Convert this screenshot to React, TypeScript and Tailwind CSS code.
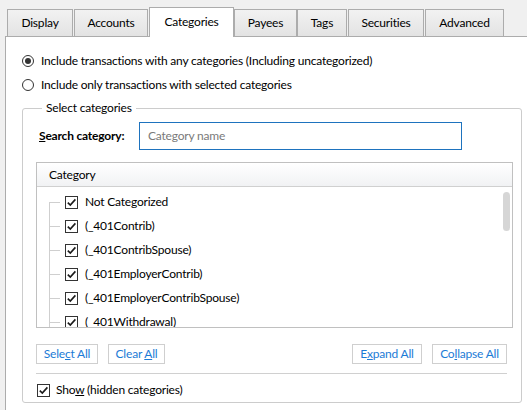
import type { ReactNode } from "react";

const TABS = [
  { label: "Display", cls: "w-[66px]" },
  { label: "Accounts", cls: "ml-[1px] w-[74px]" },
  { label: "Categories", cls: "ml-[1px] w-[85px]", active: true },
  { label: "Payees", cls: "w-[63px]" },
  { label: "Tags", cls: "w-[50px]" },
  { label: "Securities", cls: "ml-[1px] w-[76px]" },
  { label: "Advanced", cls: "ml-[1px] w-[79px]" },
];

const CATEGORIES = [
  "Not Categorized",
  "(_401Contrib)",
  "(_401ContribSpouse)",
  "(_401EmployerContrib)",
  "(_401EmployerContribSpouse)",
  "(_401Withdrawal)",
];

function Radio({ checked }: { checked?: boolean }) {
  return (
    <span className="flex h-[12px] w-[12px] items-center justify-center rounded-full border border-[#333333] bg-white">
      {checked && <span className="h-[6px] w-[6px] rounded-full bg-[#333333]" />}
    </span>
  );
}

function CheckBox() {
  return (
    <span className="flex h-[13px] w-[13px] shrink-0 items-center justify-center border border-[#333333] bg-white">
      <svg viewBox="0 0 11 11" className="h-[11px] w-[11px]">
        <path d="M1.8 5.6 L4.3 8.1 L9.4 2.4" fill="none" stroke="#1a1a1a" strokeWidth="1.6" />
      </svg>
    </span>
  );
}

function LinkButton({ children, cls }: { children: ReactNode; cls: string }) {
  return (
    <button className={`flex h-[20px] items-center justify-center border border-[#cfcfcf] bg-white text-[12px] text-[#1c7bd6] ${cls}`}>
      <span className="whitespace-pre">{children}</span>
    </button>
  );
}

export default function App() {
  return (
    <div
      className="flex h-[410px] w-[527px] flex-col overflow-hidden bg-[#f0f0f0] text-[12px] tracking-[-0.2px] text-black"
      style={{ fontFamily: 'Lato, "Noto Sans", sans-serif' }}
    >
      {/* tab strip */}
      <div className="flex h-[36px] items-end pl-[7px]">
        {TABS.map((t) =>
          t.active ? (
            <div
              key={t.label}
              className={`relative z-10 -mb-[1px] flex h-[30px] items-center justify-center border border-b-0 border-[#acacac] bg-white pb-[2px] ${t.cls}`}
            >
              {t.label}
            </div>
          ) : (
            <div
              key={t.label}
              className={`flex h-[27px] items-center justify-center border border-b-0 border-[#acacac] bg-gradient-to-b from-[#f2f2f2] to-[#e3e3e3] ${t.cls}`}
            >
              {t.label}
            </div>
          )
        )}
      </div>

      {/* page */}
      <div className="ml-[5px] flex flex-1 flex-col border-l border-t border-[#acacac] bg-white pl-[16px]">
        <div className="mt-[12px] flex h-[24px] items-center gap-[7px]">
          <Radio checked />
          <span>Include transactions with any categories (Including uncategorized)</span>
        </div>
        <div className="flex h-[23px] items-center gap-[7px]">
          <Radio />
          <span>Include only transactions with selected categories</span>
        </div>

        <fieldset className="mt-[4px] h-[303px] w-[500px] rounded-[3px] border border-[#cccccc] pl-[13px]">
          <legend className="ml-[6px] px-[4px] leading-[16px]">Select categories</legend>

          <div className="mt-[6px] flex h-[28px] items-center">
            <span className="w-[103px] whitespace-nowrap pl-[3px] font-bold">
              <span className="underline">S</span>earch category:
            </span>
            <div className="flex h-[28px] w-[323px] items-center border border-[#1e73be] pl-[8px] text-[#7a7a7a]">
              Category name
            </div>
          </div>

          {/* tree list */}
          <div className="relative mt-[12px] h-[166px] w-[477px] overflow-hidden border border-[#c0c0c0]">
            <div className="flex h-[24px] items-center border-b border-[#d0d0d0] bg-gradient-to-b from-[#ffffff] to-[#f1f2f4] pl-[12px]">
              Category
            </div>
            <div className="relative pl-[12px] pt-[3px]">
              <div className="absolute left-[12px] top-[15px] h-[160px] w-px bg-[#cfcfcf]" />
              {CATEGORIES.map((c) => (
                <div key={c} className="flex h-[24px] items-center">
                  <span className="h-px w-[11px] bg-[#cfcfcf]" />
                  <span className="ml-[5px]">
                    <CheckBox />
                  </span>
                  <span className="ml-[7px]">{c}</span>
                </div>
              ))}
            </div>
            <div className="absolute right-[2px] top-[29px] h-[39px] w-[7px] rounded-full bg-[#d6d6d6]" />
          </div>

          <div className="mt-[16px] flex w-[471px] items-center">
            <LinkButton cls="w-[62px]">
              Sele<span className="underline">c</span>t All
            </LinkButton>
            <LinkButton cls="ml-[10px] w-[57px]">
              Clear <span className="underline">A</span>ll
            </LinkButton>
            <LinkButton cls="ml-auto w-[70px]">
              E<span className="underline">x</span>pand All
            </LinkButton>
            <LinkButton cls="ml-[10px] w-[75px]">
              Co<span className="underline">l</span>lapse All
            </LinkButton>
          </div>

          <div className="mt-[9px] h-px w-[471px] bg-[#d0d0d0]" />

          <div className="mt-[7px] flex items-center pl-[1px]">
            <CheckBox />
            <span className="ml-[6px]">
              Sho<span className="underline">w</span> (hidden categories)
            </span>
          </div>
        </fieldset>
      </div>
    </div>
  );
}
